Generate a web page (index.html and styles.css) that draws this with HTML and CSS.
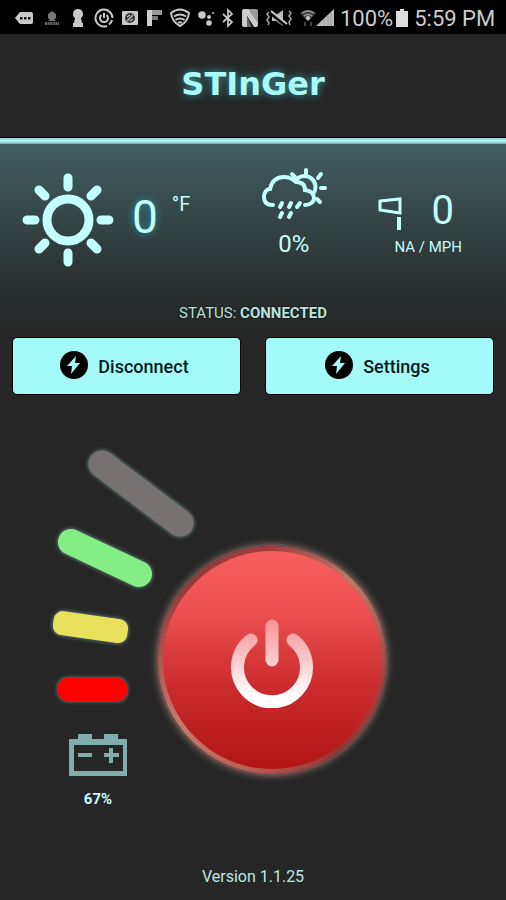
FILE: index.html
```html
<!DOCTYPE html>
<html lang="en">
<head>
<meta charset="utf-8">
<meta name="viewport" content="width=device-width, initial-scale=1">
<title>Stinger</title>
<link rel="stylesheet" href="styles.css">
</head>
<body>
<div class="statusbar">
  <div class="notifications">
    <svg width="20" height="20" viewBox="0 0 20 20"><path d="M6 4h11q2 0 2 2v8q0 2-2 2H6l-5-6z" fill="#c9c9c9"/><path d="M6 9h2.500v2.500H6zM10 9h2.500v2.500H10zM14 9h2.500v2.500H14z" fill="#111"/></svg>
    <svg width="20" height="20" viewBox="0 0 20 20"><path d="M10 3l4 3v4l-2 2 3 1H5l3-1-2-2V6z" fill="#777"/><path d="M3 15.500h14" stroke="#666" stroke-width="3" stroke-dasharray="2 .6"/></svg>
    <svg width="16" height="20" viewBox="0 0 16 20"><path d="M8 1a5 5 0 0 1 3 9l1 5h1v4H3v-4h1l1-5a5 5 0 0 1 3-9z" fill="#c9c9c9"/></svg>
    <svg width="20" height="20" viewBox="0 0 20 20" fill="none" stroke="#c9c9c9" stroke-width="2"><path d="M18.500 10A8.500 8.500 0 1 0 13 18M7.500 7a4 4 0 1 0 5 0M10 5v5M15 16.500A8.500 8.500 0 0 0 18 12"/></svg>
    <svg width="16" height="20" viewBox="0 0 16 20"><rect y="3" width="16" height="14" rx="1" fill="#c9c9c9"/><circle cx="8" cy="10" r="5" fill="#333"/><path d="M5 13l6-6M5 9l3-2M8 13l3-2" stroke="#bbb" stroke-width="1.500"/></svg>
    <svg width="16" height="20" viewBox="0 0 16 20"><path d="M1 2h5v16H1z" fill="#d0d0d0"/><path d="M6 2h10v5H6z" fill="#999"/><path d="M6 8h6v4H6z" fill="#777"/></svg>
    <svg width="20" height="20" viewBox="0 0 20 20" fill="none" stroke="#c9c9c9" stroke-width="2"><path d="M1 5q9-7 18 0-1 9-9 13Q2 14 1 5z"/><path d="M4 8.500q6-4 12 0M5.500 12q4.500-3 9 0M8 15q2-1.500 4 0"/></svg>
    <svg width="16" height="20" viewBox="0 0 16 20" fill="#c9c9c9"><circle cx="4" cy="7" r="3.800"/><circle cx="11" cy="9" r="2"/><circle cx="15" cy="5" r="1"/><circle cx="11" cy="15" r="2.800"/></svg>
    <svg width="12" height="20" viewBox="0 0 12 20" fill="none" stroke="#c9c9c9" stroke-width="1.700"><path d="M1 6l9 8-4 4V2l4 4-9 8"/></svg>
    <svg width="16" height="20" viewBox="0 0 16 20"><path d="M0 3q0-2 2-2h5l9 13V3v14q0 2-2 2h-2L5 8v11H2q-2 0-2-2z" fill="#ccc"/><path d="M8 1h6q2 0 2 2v12L8 4z" fill="#999"/><path d="M5 8v11h5z" fill="#666"/></svg>
    <svg width="26" height="20" viewBox="0 0 26 20"><path d="M6 7h4l7-5v16l-7-5H6z" fill="#bbb"/><path d="M5 5l16 13" stroke="#000" stroke-width="4"/><path d="M5 3l16 13" stroke="#ccc" stroke-width="2"/><path d="M3 4l-2 2 2 3-2 3 2 3-1 2M23 3l2 2-2 3 2 3-2 3 1 3" fill="none" stroke="#aaa" stroke-width="1.500"/></svg>
    <svg width="16" height="20" viewBox="0 0 16 20"><path d="M0 5q8-6 16 0l-8 9z" fill="#444"/><path d="M2 5q6-4 12 0M4 8q4-3 8 0" fill="none" stroke="#999" stroke-width="1.500"/><circle cx="8" cy="10" r="2" fill="#ccc"/><path d="M5 14v4M11 14v4" stroke="#444" stroke-width="2"/></svg>
  </div>
  <div class="system">
    <svg width="18" height="20" viewBox="0 0 18 20"><path d="M0 18L18 1v17z" fill="#bbb"/><path d="M8 18v-7M12 18V7M15 18V5" stroke="#999"/></svg>
    <span class="charge">100%<svg width="12" height="20" viewBox="0 0 12 20"><path d="M4 1h4v2h4v16H0V3h4z" fill="#ddd"/></svg></span>
    <span>5:59 PM</span>
  </div>
</div>

<header class="brand"><h1>STInGer</h1></header>

<main>
  <section class="weather" aria-label="Weather">
    <div class="temperature">
      <svg width="92" height="94" viewBox="0 0 92 94" fill="none" stroke="#c3fffc" stroke-linecap="round">
        <circle cx="46" cy="47" r="21" stroke-width="9"/>
        <path stroke-width="9" d="M46 5v9M46 80v9M5 47h8M79 47h8M17 17l6 6M75 17l-6 6M17 76l6-6M75 76l-6-6"/>
      </svg>
      <span class="degrees">0</span>
      <span class="unit">°F</span>
    </div>
    <div class="rain">
      <svg width="68" height="54" viewBox="0 0 68 54" fill="none" stroke="#c3fffc" stroke-linecap="round">
        <path stroke-width="4" d="M13 38C6 38 4 34 4 30c0-5 3-8 6-8C12 13 18 10 24 10c5 0 9 2 12 5 6 0 9 3 9 8 6 1 9 4 9 8 0 4-4 7-9 7"/>
        <path stroke-width="4" d="M37 12c4-4 11-4 15 0 5 5 4 11 1 15"/>
        <path stroke-width="4" d="M46 3v4M32 7l3 3M61 7l-3 4M61 21h4M57 32l3 3M22 36l-2 4M31 36l-2 4M40 36l-3 4M22 46l-2 4M31 46l-2 4"/>
      </svg>
      <span>0%</span>
    </div>
    <div class="wind">
      <div class="wind-speed">
        <svg width="24" height="34" viewBox="0 0 24 34" fill="none" stroke="#c3fffc"><path stroke-width="3" d="M2 4l20-2v14L2 13z"/><path stroke-width="4" d="M21 20v13"/></svg>
        <span>0</span>
      </div>
      <span class="wind-unit">NA / MPH</span>
    </div>
  </section>

  <p class="status">STATUS: <strong>CONNECTED</strong></p>

  <div class="actions">
    <button type="button"><svg width="28" height="32" viewBox="0 0 28 32"><circle cx="14" cy="15" r="14"/><path d="M16 6L7 16h5l-1 8 9-11h-5z" fill="#a3faf8"/></svg>Disconnect</button>
    <button type="button"><svg width="28" height="32" viewBox="0 0 28 32"><circle cx="14" cy="15" r="14"/><path d="M16 6L7 16h5l-1 8 9-11h-5z" fill="#a3faf8"/></svg>Settings</button>
  </div>

  <section class="dial" aria-label="Battery and power">
    <svg class="levels" width="160" height="270" viewBox="0 0 160 270" fill="none" stroke-linecap="round">
      <path d="M54 24l78 59" stroke="#777171" stroke-width="27"/>
      <path d="M23 102l68 32" stroke="#84ed83" stroke-width="26"/>
      <rect x="5" y="175" width="75" height="24" rx="9" transform="rotate(8 42 187)" fill="#e9e05b"/>
      <rect x="10" y="238" width="69" height="23" rx="9" fill="#f00"/>
    </svg>
    <div class="battery">
      <svg width="60" height="44" viewBox="0 0 60 44" fill="#7faeac"><path fill-rule="evenodd" d="M1 6h9V1h14v5h12V1h14v5h9v37H1zM6 12v26h49V12z"/><path d="M10 20h14v4H10zM36 20h5v-5h4v5h6v4h-6v6h-4v-6h-5z"/></svg>
      <span>67%</span>
    </div>
    <button class="power" type="button" aria-label="Power">
      <svg width="84" height="92" viewBox="0 0 84 92" fill="none" stroke-linecap="round">
        <defs><linearGradient id="shine" gradientUnits="userSpaceOnUse" x1="0" y1="0" x2="0" y2="80"><stop stop-color="#f5898b"/><stop offset="1" stop-color="#fff"/></linearGradient><linearGradient id="stem" gradientUnits="userSpaceOnUse" x1="0" y1="0" x2="0" y2="50"><stop stop-color="#f58f91"/><stop offset="1" stop-color="#fbd1d2"/></linearGradient></defs>
        <path d="M21 24a34.500 34.500 0 1 0 42 0" stroke="url(#shine)" stroke-width="13"/>
        <path d="M42.010 10L42 44" stroke="url(#stem)" stroke-width="13"/>
      </svg>
    </button>
  </section>
</main>

<footer>Version 1.1.25</footer>
</body>
</html>
```
FILE: styles.css
```css
* {
  box-sizing: border-box;
}

body {
  margin: 0;
  min-height: 100vh;
  display: flex;
  flex-direction: column;
  background: #262626;
  color: #c3fffc;
  font-family: Roboto, "Liberation Sans", sans-serif;
}

svg {
  display: block;
  flex: none;
}

.statusbar {
  display: flex;
  justify-content: space-between;
  align-items: center;
  height: 34px;
  padding: 2px 11px 0 14px;
  background: #000;
  color: #ccc;
  font-size: 22px;
  white-space: nowrap;
}

.notifications,
.system,
.charge {
  display: flex;
  align-items: center;
}

.notifications {
  gap: 8px;
}

.system {
  gap: 6px;
}

.charge {
  gap: 3px;
}

.brand {
  display: flex;
  justify-content: center;
  align-items: center;
  height: 104px;
  padding-bottom: 4px;
  border-bottom: 1px solid #000;
}

.brand h1 {
  margin: 0;
  font: bold 32px "DejaVu Sans", sans-serif;
  color: #a9fbf9;
  text-shadow: 0 0 8px #3b9da6;
}

main {
  border-top: 6px solid #a8f5f2;
  background: linear-gradient(#405e60, #2c3333 130px, #262626 190px);
  border-image: linear-gradient(#8ed4d2, #b9fffc 3px, #6fa9a8 6px) 6 0 0;
}

.weather {
  display: flex;
  justify-content: space-between;
  align-items: flex-start;
  height: 159px;
  padding: 23px 44px 0 22px;
}

.temperature {
  display: flex;
  align-items: center;
  width: 188px;
  padding-top: 6px;
}

.degrees {
  margin: 0 0 6px 18px;
  font-size: 46px;
  line-height: 54px;
  text-shadow: 0 0 8px #2b9aa8;
}

.unit {
  margin-left: 14px;
  padding-bottom: 32px;
  font-size: 20px;
}

.rain {
  display: flex;
  flex-direction: column;
  align-items: center;
  gap: 8px;
  font-size: 24px;
  line-height: 30px;
}

.wind {
  display: flex;
  flex-direction: column;
  align-items: flex-end;
  gap: 2px;
  padding-top: 20px;
}

.wind-speed {
  display: flex;
  align-items: center;
  gap: 30px;
  padding-right: 8px;
  font-size: 40px;
  line-height: 48px;
}

.wind-speed svg {
  margin-top: 6px;
}

.wind-unit {
  font-size: 15px;
  line-height: 20px;
}

.status {
  margin: 0;
  text-align: center;
  font-size: 15px;
  line-height: 20px;
  color: #b5e5e0;
  text-shadow: 0 0 2px #000;
}

.actions {
  display: grid;
  grid-template-columns: 1fr 1fr;
  gap: 24px;
  padding: 14px 12px 0;
}

.actions button {
  display: flex;
  justify-content: center;
  align-items: center;
  gap: 10px;
  height: 58px;
  padding: 0 4px 0 0;
  border: 1px solid #000;
  border-radius: 5px;
  background: #a3faf8;
  color: #06191c;
  font: 500 18px Roboto, sans-serif;
}

.dial {
  display: grid;
  grid-template-columns: 110px 228px 72px;
  justify-content: center;
  padding-top: 45px;
}

.levels {
  grid-column: 1 / 3;
  grid-row: 1;
  pointer-events: none;
  filter: drop-shadow(0 0 2px #789b9b);
}

.battery {
  grid-column: 1;
  grid-row: 2;
  display: flex;
  flex-direction: column;
  align-items: center;
  gap: 12px;
  padding: 23px 10px 0 0;
  font-size: 15px;
  font-weight: 700;
  line-height: 20px;
}

.power {
  grid-column: 2;
  grid-row: 1 / 3;
  align-self: start;
  display: flex;
  justify-content: center;
  align-items: center;
  width: 228px;
  height: 228px;
  margin-top: 106px;
  padding: 3px 0 0;
  border: 5px solid transparent;
  border-radius: 50%;
  background:
    linear-gradient(#f65e60, #ea4e50 30%, #cb2b2d 62%, #b01516) padding-box,
    conic-gradient(#a43e3e, #b97a68 45deg, #a93f3f 100deg, #943434 145deg, #b95b52 190deg, #c47b6c 235deg, #a94c48 280deg, #973838 315deg, #a43e3e) border-box;
  box-shadow: 0 0 8px #c0908a;
}

footer {
  margin-top: auto;
  padding-bottom: 13px;
  text-align: center;
  font-size: 16px;
  line-height: 20px;
  color: #b9e9e3;
}
```
